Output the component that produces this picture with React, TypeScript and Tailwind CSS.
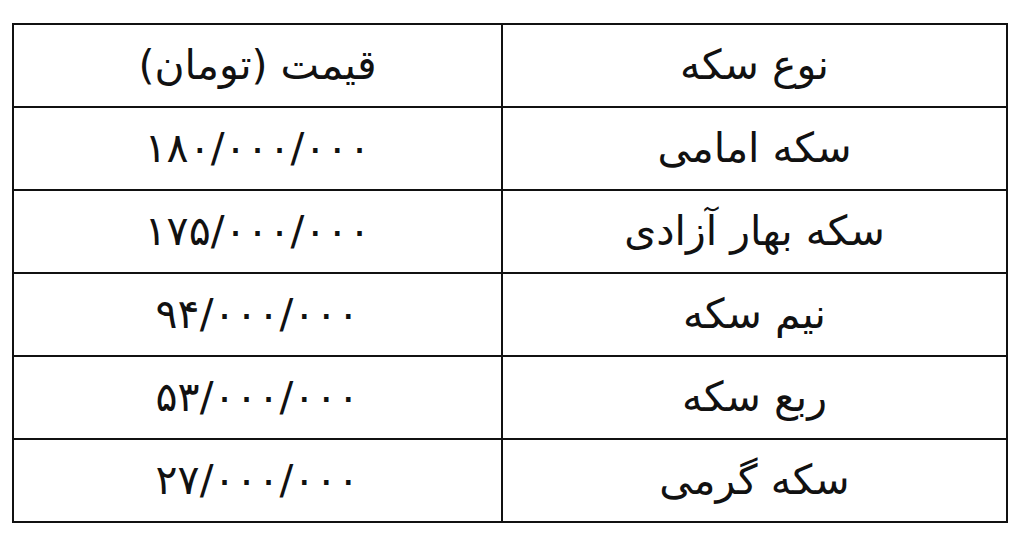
const rows = [
  { name: 'نوع سکه', price: 'قیمت (تومان)' },
  { name: 'سکه امامی', price: '۱۸۰/۰۰۰/۰۰۰' },
  { name: 'سکه بهار آزادی', price: '۱۷۵/۰۰۰/۰۰۰' },
  { name: 'نیم سکه', price: '۹۴/۰۰۰/۰۰۰' },
  { name: 'ربع سکه', price: '۵۳/۰۰۰/۰۰۰' },
  { name: 'سکه گرمی', price: '۲۷/۰۰۰/۰۰۰' },
]

export default function App() {
  return (
    <div className="w-[1018px] h-[549px] bg-white pt-[23px] pl-[12px]">
      <div
        dir="rtl"
        className="grid grid-cols-[505px_489px] w-[996px] border-t-2 border-r-2 border-[#111] text-[#111] font-['DejaVu_Sans',sans-serif] text-[41px] leading-none"
      >
        {rows.map((row) => (
          <div key={row.name} className="contents">
            <div className="h-[83px] flex items-center justify-center border-b-2 border-l-2 border-[#111]">
              {row.name}
            </div>
            <div className="h-[83px] flex items-center justify-center border-b-2 border-l-2 border-[#111]">
              <span dir="ltr">{row.price}</span>
            </div>
          </div>
        ))}
      </div>
    </div>
  )
}
